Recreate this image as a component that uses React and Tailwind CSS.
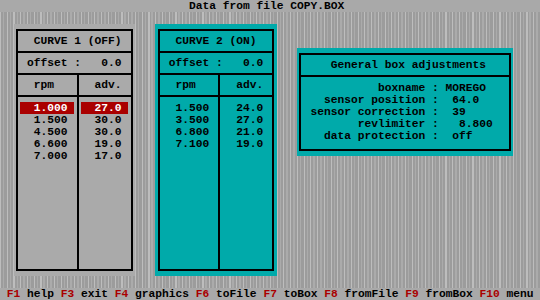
import React from 'react';

const curve1 = [
  ['1.000', '27.0'],
  ['1.500', '30.0'],
  ['4.500', '30.0'],
  ['6.600', '19.0'],
  ['7.000', '17.0'],
];

const curve2 = [
  ['1.500', '24.0'],
  ['3.500', '27.0'],
  ['6.800', '21.0'],
  ['7.100', '19.0'],
];

const boxLines = [
  '           boxname : MOREGO',
  '   sensor position :  64.0',
  ' sensor correction :  39',
  '        revlimiter :   8.800',
  '   data protection :  off',
];

const keys = [
  ['F1', 'help'],
  ['F3', 'exit'],
  ['F4', 'graphics'],
  ['F6', 'toFile'],
  ['F7', 'toBox'],
  ['F8', 'fromFile'],
  ['F9', 'fromBox'],
  ['F10', 'menu'],
];

const Cell = ({ text, selected }) => (
  <div
    className={
      selected
        ? 'h-[12px] mx-[2.3px] pl-[13.5px] bg-[#aa0000] text-white'
        : 'h-[12px] mx-[2.3px] pl-[13.5px]'
    }
  >
    {text}
  </div>
);

const CurvePanel = ({ title, rows, className, selectedRow }) => (
  <div className={className + ' px-[2.4px] py-[5px]'}>
    <div className="h-full flex flex-col border-2 border-black">
      <div className="h-[22px] flex items-center pl-[15.8px] border-b-2 border-black">{title}</div>
      <div className="h-[22px] flex items-center pl-[9px] border-b-2 border-black whitespace-pre">
        {'offset :   0.0'}
      </div>
      <div className="h-[22px] flex border-b-2 border-black">
        <div className="w-[60.7px] flex items-center pl-[15.8px] border-r-2 border-black">rpm</div>
        <div className="flex-1 flex items-center pl-[15.8px]">adv.</div>
      </div>
      <div className="flex-1 flex">
        <div className="w-[60.7px] pt-[5px] border-r-2 border-black">
          {rows.map((r, i) => (
            <Cell key={i} text={r[0]} selected={i === selectedRow} />
          ))}
        </div>
        <div className="flex-1 pt-[5px]">
          {rows.map((r, i) => (
            <Cell key={i} text={r[1]} selected={i === selectedRow} />
          ))}
        </div>
      </div>
    </div>
  </div>
);

export default function App() {
  return (
    <div className="w-[540px] h-[300px] overflow-hidden grid grid-cols-[repeat(80,6.75px)] grid-rows-[repeat(25,12px)] bg-[repeating-linear-gradient(90deg,#bdbdbd_0px,#bdbdbd_1px,#9c9c9c_1px,#9c9c9c_3px,#ababab_3px,#ababab_4.4px,#9c9c9c_4.4px,#9c9c9c_6.75px)] font-['Liberation_Mono',monospace] font-bold text-[11.25px] leading-[12px] text-black">
      <div className="col-[1/-1] row-[1/2] bg-[#a9a9a9] pl-[189px] whitespace-pre">Data from file COPY.BOX</div>

      <CurvePanel
        className="col-[3/21] row-[3/24] bg-[#aaaaaa]"
        title="CURVE 1 (OFF)"
        rows={curve1}
        selectedRow={0}
      />

      <CurvePanel
        className="col-[24/42] row-[3/24] bg-[#00aaaa]"
        title="CURVE 2 (ON)"
        rows={curve2}
        selectedRow={-1}
      />

      <div className="col-[45/77] row-[5/14] bg-[#00aaaa] px-[2.4px] py-[5px]">
        <div className="h-full flex flex-col border-2 border-black">
          <div className="h-[22px] flex items-center pl-[29.4px] border-b-2 border-black whitespace-pre">
            General box adjustments
          </div>
          <div className="pt-[5px] pl-[2.35px] whitespace-pre">
            {boxLines.map((l, i) => (
              <div key={i} className="h-[12px]">{l}</div>
            ))}
          </div>
        </div>
      </div>

      <div className="col-[1/-1] row-[25/26] bg-[#a9a9a9] pl-[6.75px] whitespace-pre">
        {keys.map(([k, label], i) => (
          <span key={k}>
            <span className="text-[#aa0000]">{k}</span>
            {' ' + label + (i < keys.length - 1 ? ' ' : '')}
          </span>
        ))}
      </div>
    </div>
  );
}
